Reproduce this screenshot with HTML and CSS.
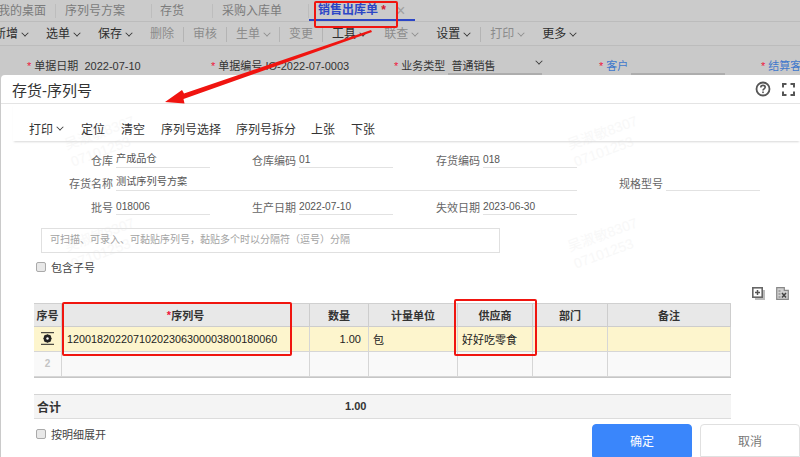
FILE: index.html
```html
<!DOCTYPE html>
<html lang="zh">
<head>
<meta charset="utf-8">
<title>存货-序列号</title>
<link rel="stylesheet" href="styles.css">
</head>
<body>
<div class="app">
  <div class="tabs">
    <span class="tab t1">我的桌面</span>
    <span class="tab t2">序列号方案</span>
    <span class="tab t3">存货</span>
    <span class="tab t4">采购入库单</span>
    <span class="tab active">销售出库单 <i class="req">*</i></span>
    <span class="tab-x">×</span>
  </div>
  <div class="tools">
    <span class="tool first">新增<b class="car"></b></span>
    <span class="tool">选单<b class="car"></b></span>
    <span class="tool">保存<b class="car"></b></span>
    <span class="tool off sep">删除</span>
    <span class="tool off sep">审核</span>
    <span class="tool off sep">生单<b class="car"></b></span>
    <span class="tool off sep">变更</span>
    <span class="tool">工具<b class="car"></b></span>
    <span class="tool off">联查<b class="car"></b></span>
    <span class="tool before-sep">设置<b class="car"></b></span>
    <span class="tool off sep2">打印<b class="car"></b></span>
    <span class="tool">更多<b class="car"></b></span>
  </div>
  <div class="bgform">
    <span class="bf b1"><i class="req">*</i> 单据日期&nbsp; 2022-07-10</span>
    <span class="bf b2"><i class="req">*</i> 单据编号 IO-2022-07-0003</span>
    <span class="bf b3"><i class="req">*</i> 业务类型&nbsp; 普通销售</span>
    <b class="car b-car"></b>
    <span class="bf b4"><i class="req">*</i> <em>客户</em></span>
    <span class="bf b5"><i class="req">*</i> <em>结算客户</em></span>
    <span class="uline u1"></span>
    <span class="uline u2"></span>
  </div>
</div>

<section class="modal">
  <div class="wm w1">吴淑敏8307<br>07101253</div>
  <div class="wm w2">吴淑敏8307<br>07101253</div>
  <div class="wm w3">吴淑敏8307<br>07101253</div>
  <div class="wm w4">吴淑敏8307<br>07101253</div>
  <header class="mhead">
    <h1>存货-序列号</h1>
    <div class="micons">
      <svg width="16" height="16" viewBox="0 0 16 16"><circle cx="8" cy="8" r="6.500" fill="none" stroke="#555" stroke-width="1.800"/><path d="M5.800 6.400c0-1.300 1-2 2.200-2s2.200.8 2.200 1.900c0 1.500-2.200 1.500-2.200 3.100" fill="none" stroke="#555" stroke-width="1.600"/><rect x="7.200" y="10.500" width="1.600" height="1.600" fill="#555"/></svg>
      <svg width="13" height="13" viewBox="0 0 13 13"><path d="M1 4.500V1h3.500M8.500 1H12v3.500M12 8.500V12H8.500M4.500 12H1V8.500" fill="none" stroke="#555" stroke-width="2"/></svg>
    </div>
  </header>
  <nav class="mtools">
    <span class="print">打印<b class="car dark"></b></span><span>定位</span><span>清空</span><span class="long">序列号选择</span><span class="long">序列号拆分</span><span>上张</span><span>下张</span>
  </nav>
  <div class="fields">
    <label>仓库</label><div class="val">产成品仓</div>
    <label>仓库编码</label><div class="val">01</div>
    <label>存货编码</label><div class="val">018</div>
    <div></div><div></div>
    <label>存货名称</label><div class="val wide">测试序列号方案</div>
    <label>规格型号</label><div class="val"></div>
    <label>批号</label><div class="val">018006</div>
    <label>生产日期</label><div class="val">2022-07-10</div>
    <label>失效日期</label><div class="val">2023-06-30</div>
  </div>
  <div class="scan">可扫描、可录入、可黏贴序列号，黏贴多个时以分隔符（逗号）分隔</div>
  <div class="check"><span class="box"></span>包含子号</div>
  <div class="ticons">
    <svg width="13" height="13" viewBox="0 0 13 13"><path d="M3 3h10v10H3z" fill="#bbb"/><rect x=".8" y=".8" width="9.400" height="9.400" fill="#fff" stroke="#666" stroke-width="1.600"/><path d="M3 5.500h5M5.500 3v5" stroke="#555" stroke-width="1.500"/></svg>
    <svg width="13" height="13" viewBox="0 0 13 13"><path d="M.7.700h7.600v2.600h4V12.300H.7z" fill="#d0d0d0" stroke="#888" stroke-width="1.200"/><path d="M6 6l4 4.500M10 6l-4 4.500" stroke="#444" stroke-width="1.500"/><path d="M2.500 4h2M2.500 7h2M2.500 10h2" stroke="#777" stroke-width="1"/></svg>
  </div>
  <div class="grid">
    <div class="cell hd">序号</div><div class="cell hd"><i class="req">*</i>序列号</div><div class="cell hd">数量</div><div class="cell hd">计量单位</div><div class="cell hd">供应商</div><div class="cell hd">部门</div><div class="cell hd">备注</div>
    <div class="cell sel ctr"><svg width="13" height="13" viewBox="0 0 13 13"><path d="M0 .700h13M0 12.300h13" stroke="#222" stroke-width="1"/><circle cx="6.500" cy="6.500" r="2.800" fill="none" stroke="#222" stroke-width="2.200"/><path d="M6.500 2.500v8M2.500 6.500h8M3.700 3.700l5.600 5.600M9.300 3.700l-5.600 5.600" stroke="#222" stroke-width="1"/><circle cx="6.500" cy="6.500" r="1.200" fill="#fff"/></svg></div>
    <div class="cell sel num-serial">12001820220710202306300003800180060</div><div class="cell sel right">1.00</div><div class="cell sel">包</div><div class="cell sel">好好吃零食</div><div class="cell sel"></div><div class="cell sel"></div>
    <div class="cell blank ctr faint">2</div><div class="cell blank"></div><div class="cell blank"></div><div class="cell blank"></div><div class="cell blank"></div><div class="cell blank"></div><div class="cell blank"></div>
  </div>
  <div class="sum">
    <span class="sum-label">合计</span><span class="sum-val">1.00</span>
  </div>
  <div class="foot">
    <div class="check low"><span class="box"></span>按明细展开</div>
    <div class="btns"><button class="ok">确定</button><button class="no">取消</button></div>
  </div>
</section>

<div class="mark m-tab"></div>
<div class="mark m-serial"></div>
<div class="mark m-supplier"></div>
<svg class="arrow" width="800" height="457" viewBox="0 0 800 457"><path d="M371 30L184 93.500 182 90 165 102l19.500 1.500-1-4.500L372 32z" fill="#f01410"/></svg>
</body>
</html>
```
FILE: styles.css
```css
* { box-sizing: border-box; }
html, body { margin: 0; padding: 0; }
body { width: 800px; height: 457px; overflow: hidden; position: relative; background: #fff;
  font-family: "Liberation Sans", "Noto Sans CJK SC", sans-serif; font-size: 12px; color: #333; }
i, em { font-style: normal; }
.req { color: #f0133c; }

.app { height: 457px; background: #cacaca; overflow: hidden; }
.tabs { height: 22px; display: flex; align-items: center; background: #cbcbcb; color: #7b7b7b; font-size: 12px; border-bottom: 1px solid #bcbcbc; white-space: nowrap; }
.tab { display: block; flex: none; line-height: 14px; border-right: 1px solid #bdbdbd; }
.t1 { width: 58px; margin-left: -2px; }
.t2 { width: 96px; padding-left: 9px; }
.t3 { width: 61px; padding-left: 8px; }
.t4 { width: 96px; padding-left: 9px; }
.tab.active { width: 106px; height: 20px; padding-left: 9px; line-height: 19px; font-weight: bold; color: #2c46c6; border-right: 0; border-bottom: 2px solid #2c46c6; }
.tab.active .req { color: #d9142e; }
.tab-x { color: #a0a0a0; font-size: 16px; margin-left: -19px; }

.tools { height: 24px; padding-top: 1px; display: flex; align-items: center; background: #cbcbcb; border-bottom: 1px solid #bcbcbc; color: #2e2e2e; font-size: 12px; white-space: nowrap; }
.tool { display: flex; align-items: center; flex: none; margin-right: 18px; line-height: 15px; }
.tool.first { margin-left: -6px; }
.tool.off { color: #8b8b8b; }
.tool.sep { padding-right: 9px; margin-right: 9px; border-right: 1px solid #b4b4b4; }
.tool.before-sep { margin-right: 10px; }
.tool.sep2 { padding-left: 9px; border-left: 1px solid #b4b4b4; }
.car { display: inline-block; width: 6px; height: 6px; margin: -3px 0 0 4px; border-right: 1.500px solid currentColor; border-bottom: 1.500px solid currentColor; transform: rotate(45deg) scale(.85); }
.car.dark { color: #333; }

.bgform { position: relative; height: 29px; background: #c9c9c9; font-size: 11px; color: #333; white-space: nowrap; }
.bf { position: absolute; top: 11px; }
.bf em { color: #3f78cc; }
.b1 { left: 27px; }
.b2 { left: 211px; }
.b3 { left: 394px; }
.b4 { left: 599px; }
.b5 { left: 761px; }
.b-car { position: absolute; left: 532px; top: 15px; }
.uline { position: absolute; top: 27px; height: 2px; background: #adadad; }
.u1 { left: 448px; width: 94px; }
.u2 { left: 631px; width: 94px; }

.modal { position: absolute; z-index: 0; left: 1px; top: 75px; right: 0; bottom: 0; background: #fff; border-radius: 4px 0 0 0; overflow: hidden; }
.mhead { height: 29px; border-bottom: 1px solid #e4e4e4; display: flex; align-items: center; justify-content: space-between; padding: 0 5px 0 11px; }
.mhead h1 { margin: 0; font-size: 15px; font-weight: normal; color: #333; }
.micons { display: flex; gap: 11px; align-items: center; }
.mtools { height: 37px; margin: 0 0 0 12px; padding: 12px 0 0 16px; display: flex; align-items: center; gap: 16px; font-size: 12px; color: #333; box-shadow: 0 2px 2px -1px #d8d8d8; }
.mtools span { display: flex; align-items: center; white-space: nowrap; }
.mtools .print { margin-right: 2px; }
.mtools .long { margin-right: -1px; }

.fields { display: grid; grid-template-columns: 115px 94px 89px 94px 90px 94px 89px 94px; grid-auto-rows: 23.500px; margin-top: 3px; font-size: 11px; }
.fields label { text-align: right; padding: 0 3px 0 0; color: #666; align-self: end; white-space: nowrap; }
.val { border-bottom: 1px solid #e2e2e2; font-size: 10.200px; color: #555; display: flex; align-items: flex-end; padding-bottom: 2px; }
.val.wide { grid-column: 2 / span 5; }
.scan { margin: 13px 0 0 40px; width: 459px; height: 25px; border: 1px solid #e0e0e0; padding-left: 8px; line-height: 21px; font-size: 10px; color: #a3a3a3; }
.check { display: flex; align-items: center; gap: 5px; margin: 7px 0 0 35px; height: 14px; font-size: 11px; color: #444; }
.box { width: 10px; height: 10px; border: 1px solid #aaa; background: #e8e8e8; border-radius: 2px; }
.ticons { display: flex; justify-content: flex-end; gap: 11px; padding-right: 11px; height: 15px; margin-top: 13px; }

.grid { display: grid; grid-template-columns: 28px 248px 59px 89px 75px 75px 123px; grid-template-rows: 23px 25px 25px; margin: 1px 0 0 33px; width: 697px; border-top: 1px solid #d0d0d0; border-bottom: 1px solid #c6c6c6; box-sizing: content-box; font-size: 11px; color: #222; }
.cell { display: flex; align-items: center; padding: 0 4px; border-right: 1px solid #d6d6d6; border-bottom: 1px solid #d6d6d6; white-space: nowrap; }
.hd { justify-content: center; background: #e8e8e8; font-weight: bold; color: #333; border-color: #cdcdcd; padding: 0; }
.sel { background: #fdf5cd; }
.blank { background: #f9f9f9; }
.ctr { justify-content: center; padding: 0; }
.right { justify-content: flex-end; padding-right: 7px; }
.num-serial { font-size: 10.800px; padding-left: 5px; }
.faint { color: #c4c4c4; font-weight: bold; font-size: 10px; }

.sum { display: flex; align-items: center; height: 25px; width: 697px; margin: 16px 0 0 33px; background: #f4f4f4; border-top: 1px solid #d4d4d4; border-bottom: 1px solid #dcdcdc; font-weight: bold; color: #333; font-size: 12px; }
.sum-label { padding-left: 3px; }
.sum-val { margin-left: 284px; font-size: 11px; }

.foot { display: flex; justify-content: space-between; align-items: flex-start; padding-top: 5px; }
.foot .low { margin-top: 3px; }
.btns { display: flex; gap: 8px; }
button { width: 100px; height: 33px; border-radius: 4px 4px 0 0; font: inherit; font-size: 12px; padding: 0; border: 1px solid #e0e0e0; }
.ok { background: #3a86fb; border-color: #3a86fb; color: #fff; }
.no { background: #fff; color: #777; }

.wm { position: absolute; z-index: -1; transform: rotate(-20deg); color: #f8f8f8; font-size: 14px; line-height: 18px; white-space: nowrap; }
.w1 { left: 568px; top: 150px; }
.w2 { left: 568px; top: 48px; }
.w3 { left: 65px; top: 150px; }
.w4 { left: 65px; top: 48px; }

.mark { position: absolute; border: 2.500px solid #f0150f; border-radius: 2px; }
.m-tab { left: 314px; top: 1px; width: 84px; height: 27px; }
.m-serial { left: 62px; top: 302px; width: 230px; height: 54px; }
.m-supplier { left: 454px; top: 299px; width: 83px; height: 57px; }
.arrow { position: absolute; left: 0; top: 0; pointer-events: none; }
```
